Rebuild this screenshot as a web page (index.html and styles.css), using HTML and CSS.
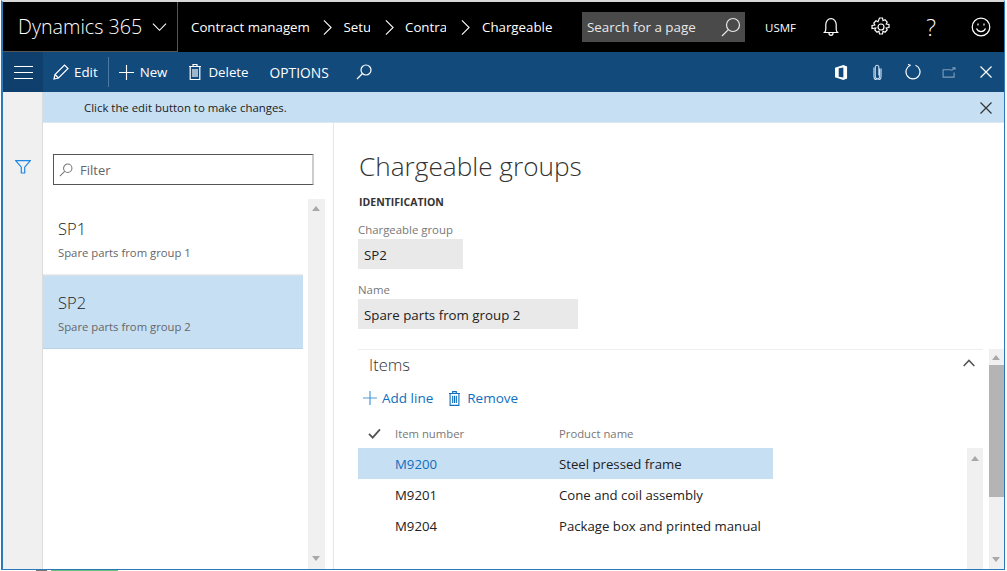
FILE: index.html
```html
<!DOCTYPE html>
<html lang="en">
<head>
<meta charset="utf-8">
<title>Chargeable groups</title>
<link rel="stylesheet" href="styles.css">
</head>
<body>
<div class="window">
  <header class="topbar">
    <div class="brand"><span>Dynamics 365</span>
      <svg class="chev-down" viewBox="0 0 16 10"><path d="M1 1.500 8 8.500 15 1.500"/></svg>
    </div>
    <nav class="crumbs">
      <span class="crumb c1">Contract managem</span>
      <svg class="sep" viewBox="0 0 10 18"><path d="M1 1 9 9 1 17"/></svg>
      <span class="crumb c2">Setu</span>
      <svg class="sep s2" viewBox="0 0 10 18"><path d="M1 1 9 9 1 17"/></svg>
      <span class="crumb c3">Contra</span>
      <svg class="sep" viewBox="0 0 10 18"><path d="M1 1 9 9 1 17"/></svg>
      <span class="crumb">Chargeable</span>
    </nav>
    <div class="search"><span>Search for a page</span>
      <svg class="ic20" viewBox="0 0 20 20"><circle cx="12" cy="8" r="6.500"/><path d="M7.400 12.600 1 19"/></svg>
    </div>
    <div class="usmf">USMF</div>
    <div class="top-icons">
      <svg class="ic20" viewBox="0 0 20 20"><path d="M3.500 15.500c.9-.8 1.300-1.900 1.300-3.500V7.500a5.200 5.800 0 0 1 10.400 0V12c0 1.600.4 2.700 1.300 3.500z"/><path d="M8 15.500v.8a2 2 0 0 0 4 0v-.8"/></svg>
      <svg class="ic20" viewBox="0 0 20 20"><circle cx="10" cy="10" r="3"/><path d="M8.500 1h3l.5 2.700 2-.9 2.200 2.200-1 2 2.800.5v3l-2.800.5 1 2-2.200 2.200-2-1-.5 2.800h-3l-.5-2.800-2 1-2.200-2.200 1-2L1 11.500v-3l2.800-.5-1-2L5 3.800l2 .9z"/></svg>
      <span class="help">?</span>
      <svg class="ic20" viewBox="0 0 20 20"><circle cx="10" cy="10" r="8.800"/><path d="M5.500 11.500c1 2.200 2.600 3.200 4.500 3.200s3.500-1 4.500-3.200"/><path d="M7 6.500v2M13 6.500v2"/></svg>
    </div>
  </header>

  <div class="cmdbar">
    <button class="hamburger" aria-label="Menu"><i></i><i></i><i></i></button>
    <div class="cmd edit">
      <svg class="ic16" viewBox="0 0 16 16"><path d="M1 15l1-4.500L11.500 1l3.500 3.500L5.500 14z"/><path d="M2 10.500 5.500 14"/></svg>
      <span>Edit</span>
    </div>
    <div class="cmd-div"></div>
    <div class="cmd new">
      <svg class="ic16" viewBox="0 0 16 16"><path d="M8 0v16M0 8h16"/></svg>
      <span>New</span>
    </div>
    <div class="cmd del">
      <svg class="ic-trash" viewBox="0 0 12 16"><path d="M0 2.500h12M4 2.500V.5h4v2M1.200 2.500V15.500h9.600V2.500M4 5v8M6 5v8M8 5v8"/></svg>
      <span>Delete</span>
    </div>
    <div class="cmd options">OPTIONS</div>
    <svg class="ic16 cmd-search" viewBox="0 0 16 16"><circle cx="10" cy="6" r="5"/><path d="M6.500 9.500 1 15"/></svg>
    <div class="cmd-right">
      <svg class="ic-office" viewBox="0 0 14 16"><path d="M0 3 9 0l4 1.500v13L9 16l-9-3zM9 2.500 4 3.500v9l5 1z" fill-rule="evenodd"/></svg>
      <svg class="ic-clip" viewBox="0 0 10 18"><path d="M7.500 5v9a2.500 2.500 0 0 1-5 0V3.500a2 2 0 0 1 4 0V13"/><path d="M9 5v9a4 4 0 0 1-8 0V4"/></svg>
      <svg class="ic16" viewBox="0 0 16 16"><path d="M10.500 1.300a7 7 0 1 1-5 0"/><path d="M5.500 1.300 3 .5"/></svg>
      <svg class="ic-popout" viewBox="0 0 16 12"><path d="M10 3H1v8h12V6M10 4l4-3M11 1h3v2"/></svg>
      <svg class="ic-x" viewBox="0 0 12 12"><path d="M0.500 .5l11 11M11.500 .5l-11 11"/></svg>
    </div>
  </div>

  <div class="body">
    <aside class="rail">
      <svg class="ic-filter" viewBox="0 0 16 14"><path d="M.7.700h14.600L9.700 7.200v5.800h-3.400V7.200z"/></svg>
    </aside>
    <div class="main">
      <div class="msgbar">
        <span>Click the edit button to make changes.</span>
        <svg class="ic-x dark" viewBox="0 0 12 12"><path d="M0.500 .5l11 11M11.500 .5l-11 11"/></svg>
      </div>
      <div class="split">
        <section class="listpane">
          <div class="filter">
            <svg class="ic-fs" viewBox="0 0 16 16"><circle cx="10" cy="6" r="4.800"/><path d="M6.500 9.500 1 15"/></svg>
            <span>Filter</span>
          </div>
          <div class="listwrap">
            <ul class="list">
              <li class="li"><div class="li-t">SP1</div><div class="li-s">Spare parts from group 1</div></li>
              <li class="li sel"><div class="li-t">SP2</div><div class="li-s">Spare parts from group 2</div></li>
            </ul>
            <div class="scroll list-scroll"><b class="up"></b><b class="down"></b></div>
          </div>
        </section>
        <section class="detail">
          <div class="form">
            <h1>Chargeable groups</h1>
            <h2>IDENTIFICATION</h2>
            <div class="lbl">Chargeable group</div>
            <div class="val v1">SP2</div>
            <div class="lbl">Name</div>
            <div class="val v2">Spare parts from group 2</div>
          </div>
          <div class="lower">
            <div class="items">
              <div class="items-head"><span>Items</span>
                <svg class="chev-up" viewBox="0 0 12 8"><path d="M.7 7 6 1.500 11.300 7"/></svg>
              </div>
              <div class="actions">
                <div class="act"><svg class="ic-plus" viewBox="0 0 14 14"><path d="M7 0v14M0 7h14"/></svg><span>Add line</span></div>
                <div class="act"><svg class="ic-trash blue" viewBox="0 0 12 16"><path d="M0 2.500h12M4 2.500V.5h4v2M1.200 2.500V15.500h9.600V2.500M4 5v8M6 5v8M8 5v8"/></svg><span>Remove</span></div>
              </div>
              <div class="grid-head">
                <svg class="ic-check" viewBox="0 0 14 12"><path d="M1 6.500 5 10.500 13 1.500"/></svg>
                <span class="col1">Item number</span><span class="col2">Product name</span>
              </div>
              <div class="grid-wrap">
                <div class="rows">
                  <div class="row sel"><span class="col1 link">M9200</span><span class="col2">Steel pressed frame</span></div>
                  <div class="row"><span class="col1">M9201</span><span class="col2">Cone and coil assembly</span></div>
                  <div class="row"><span class="col1">M9204</span><span class="col2">Package box and printed manual</span></div>
                </div>
                <div class="scroll grid-scroll"><b class="up"></b></div>
              </div>
            </div>
            <div class="scroll page-scroll"><b class="up"></b><em class="thumb"></em><b class="down"></b></div>
          </div>
        </section>
      </div>
    </div>
  </div>
</div>
<div class="under"><i class="u1"></i><i class="u2"></i></div>
</body>
</html>
```
FILE: styles.css
```css
* { box-sizing: border-box; }
html, body { margin: 0; height: 571px; overflow: hidden; background: #fff; }
body { font-family: "Open Sans", "Noto Sans", sans-serif; color: #1a1a1a; font-size: 13px; }
svg { fill: none; stroke: currentColor; stroke-width: 1.2; flex: none; display: block; }
ul { margin: 0; padding: 0; list-style: none; }

.window { width: 1004px; height: 570px; margin-left: 1px; border-left: 2px solid #2b79b9; border-right: 1px solid #2b79b9; border-bottom: 1px solid #2b79b9; border-top: 2px solid #d8d8d8; display: flex; flex-direction: column; overflow: hidden; }

.topbar { height: 50px; flex: none; background: #000; color: #fff; display: flex; align-items: center; }
.brand { width: 175px; height: 50px; border-right: 1px solid #555; border-bottom: 1px solid #555; display: flex; align-items: center; padding-left: 15px; font-size: 19.700px; font-weight: 300; gap: 10px; white-space: nowrap; }
.chev-down { width: 15px; height: 10px; margin-top: 1px; }
.crumbs { display: flex; align-items: center; margin-left: 13px; font-size: 13.300px; width: 391px; white-space: nowrap; }
.crumb.c1 { width: 118.500px; overflow: hidden; }
.crumb.c2 { width: 26.500px; overflow: hidden; margin-right: 2px; }
.crumb.c3 { width: 41px; overflow: hidden; margin-right: 2px; }
.sep { width: 9px; height: 17px; margin: 0 12px 0 13px; }
.sep.s2 { margin-right: 11px; }
.search { width: 163px; height: 30px; background: #4a4a4a; display: flex; align-items: center; justify-content: space-between; padding: 0 4px 0 5px; font-size: 13.400px; color: #e8e8e8; white-space: nowrap; }
.ic20 { width: 20px; height: 20px; }
.usmf { width: 38px; margin-left: 20px; font-size: 11.500px; white-space: nowrap; }
.top-icons { display: flex; align-items: center; margin-left: 18px; gap: 30px; }
.help { width: 20px; text-align: center; font-size: 23px; font-weight: 300; line-height: 24px; }

.cmdbar { height: 40px; flex: none; background: #134a7c; color: #fff; display: flex; align-items: center; font-size: 13.300px; white-space: nowrap; }
.hamburger { width: 40px; height: 40px; border: 0; padding: 0; background: #0f3f6c; display: flex; flex-direction: column; justify-content: center; align-items: center; gap: 5px; }
.hamburger i { display: block; width: 19px; height: 1px; background: #fff; }
.cmd { display: flex; align-items: center; }
.ic16 { width: 16px; height: 16px; }
.edit { margin-left: 10px; gap: 5px; }
.cmd-div { width: 1px; height: 30px; background: #4d7aa3; margin: 0 10px; }
.new { gap: 6px; }
.new .ic16 { width: 15px; height: 15px; }
.del { margin-left: 22px; gap: 7px; }
.ic-trash { width: 12px; height: 16px; }
.options { margin-left: 21px; font-size: 13.800px; }
.cmd-search { margin-left: 27px; }
.cmd-right { margin-left: auto; display: flex; align-items: center; gap: 23px; padding-right: 12px; }
.ic-office { width: 13px; height: 15px; fill: #fff; stroke: none; margin-right: 2px; }
.ic-clip { width: 9px; height: 16px; color: #cfe0f0; }
.ic-popout { width: 15px; height: 11px; color: #7e9cb8; margin-left: -2px; }
.ic-x { width: 12px; height: 12px; }

.body { flex: 1; min-height: 0; display: flex; }
.rail { width: 40px; flex: none; background: #f0f0f0; border-right: 1px solid #dcdcdc; padding: 68px 0 0 12px; }
.ic-filter { width: 16px; height: 14px; color: #1e88e5; }
.main { flex: 1; min-width: 0; display: flex; flex-direction: column; }
.msgbar { height: 31px; flex: none; background: #c7dff3; display: flex; align-items: center; justify-content: space-between; padding: 1px 12px 0 41px; font-size: 11.400px; color: #222; border-bottom: 1px solid #dbe8f2; }
.ic-x.dark { color: #333; }
.split { flex: 1; min-height: 0; display: flex; }

.listpane { width: 291px; flex: none; border-right: 1px solid #e6e6e6; display: flex; flex-direction: column; }
.filter { height: 31px; margin: 31px 19px 0 10px; border: 1px solid #555; border-right-color: #ccc; border-right-width: 2px; display: flex; align-items: center; padding-left: 5px; gap: 7px; font-size: 13px; color: #666; }
.ic-fs { width: 14px; height: 14px; color: #777; }
.listwrap { flex: 1; min-height: 0; margin-top: 14px; display: flex; }
.list { width: 260px; padding-top: 2px; }
.li { height: 74px; padding: 15px 0 0 15px; border-bottom: 1px solid #ececec; }
.li.sel { background: #c7dff3; border-bottom-color: #b9d2e6; border-top: 1px solid #d5e2ec; padding-top: 14px; }
.li-t { font-size: 16.500px; line-height: 26px; color: #222; font-weight: 300; }
.li-s { font-size: 11.300px; line-height: 20px; margin-top: 1px; color: #666; white-space: nowrap; }
.scroll { position: relative; background: #f0f0f0; flex: none; width: 17px; }
.list-scroll { margin-left: 5px; }
.scroll .up, .scroll .down { position: absolute; left: 4px; width: 0; height: 0; border-left: 4px solid transparent; border-right: 4px solid transparent; }
.scroll .up { top: 7px; border-bottom: 5px solid #a8a8a8; }
.scroll .down { bottom: 8px; border-top: 5px solid #a8a8a8; }

.detail { flex: 1; min-width: 0; display: flex; flex-direction: column; }
.form { padding-left: 24px; height: 226px; flex: none; }
h1 { margin: 0 0 0 1px; padding-top: 23px; font-size: 26.200px; line-height: 40px; font-weight: 300; color: #333; }
h2 { margin: 9px 0 0 1px; font-size: 10.500px; line-height: 14px; font-weight: 700; color: #333; }
.lbl { margin-top: 13px; font-size: 11.400px; line-height: 16px; color: #777; }
.val { margin-top: 1px; height: 30px; background: #e9e9e9; display: flex; align-items: center; padding: 2px 0 0 6px; font-size: 13.300px; color: #222; white-space: nowrap; }
.v1 { width: 105px; }
.v2 { width: 220px; }
.lower { flex: 1; min-height: 0; display: flex; padding-left: 24px; }
.items { flex: 1; min-width: 0; border-top: 1px solid #eee; display: flex; flex-direction: column; }
.items-head { height: 30px; flex: none; display: flex; align-items: center; justify-content: space-between; padding: 0 8px 2px 11px; font-size: 16.500px; font-weight: 300; color: #333; }
.chev-up { width: 12px; height: 8px; stroke-width: 1.600; color: #555; margin-top: -2px; }
.actions { height: 38px; flex: none; display: flex; align-items: center; gap: 16px; padding: 0 0 2px 5px; color: #106ebe; font-size: 13.500px; }
.act { display: flex; align-items: center; gap: 5px; white-space: nowrap; }
.act:nth-child(2) { gap: 7px; }
.ic-plus { width: 14px; height: 14px; color: #4b9ad8; }
.ic-trash.blue { width: 11px; height: 15px; }
.grid-head { height: 30px; flex: none; display: flex; align-items: center; font-size: 11.300px; color: #777; position: relative; }
.ic-check { position: absolute; left: 10px; top: 10px; width: 13px; height: 11px; stroke-width: 2; color: #555; }
.col1 { width: 164px; margin-left: 37px; flex: none; }
.col2 { white-space: nowrap; }
.grid-wrap { flex: 1; min-height: 0; display: flex; justify-content: space-between; }
.rows { width: 415px; }
.row { height: 31px; display: flex; align-items: center; font-size: 13.200px; color: #222; }
.row.sel { background: #c7dff3; }
.link { color: #106ebe; }
.grid-scroll { width: 16px; }
.grid-scroll .up { left: 4px; top: 8px; }
.page-scroll { margin-left: 6px; width: 15px; }
.page-scroll .up { left: 3px; top: 6px; }
.page-scroll .down { left: 3px; bottom: 7px; }
.thumb { position: absolute; left: 0; top: 16px; width: 15px; height: 132px; background: #b4b4b4; }

.under { height: 1px; position: relative; }
.u1 { position: absolute; left: 36px; top: 0; width: 11px; height: 1px; background: #777; }
.u2 { position: absolute; left: 51px; top: 0; width: 67px; height: 1px; background: #67c27c; }
```
